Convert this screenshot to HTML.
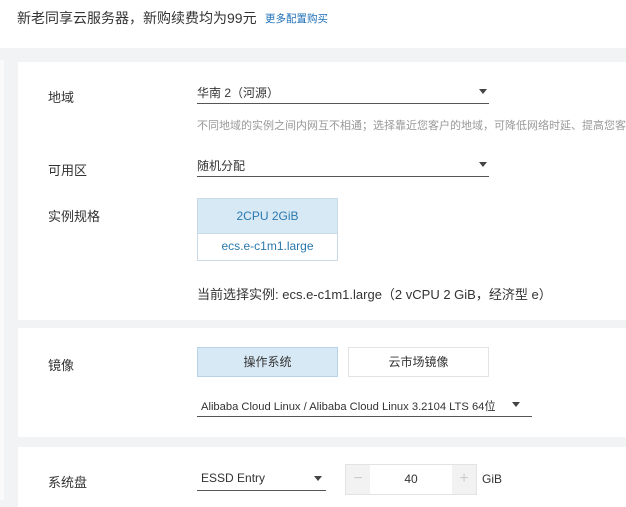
<!DOCTYPE html>
<html><head><meta charset="utf-8"><style>
*{margin:0;padding:0;box-sizing:border-box}
body{width:626px;height:500px;overflow:hidden;background:#f2f3f5;font-family:"Liberation Sans","Noto Sans CJK SC",sans-serif;position:relative;color:#333}
.a{position:absolute;white-space:nowrap}
.card{position:absolute;left:18px;right:0;background:#fff}
.lbl{font-size:13px;color:#333}
.sel{position:absolute;border-bottom:1.5px solid #555;font-size:12px;color:#333;height:20px}
.arr{position:absolute;right:2px;top:5px;width:0;height:0;border-left:4px solid transparent;border-right:4px solid transparent;border-top:5px solid #444}
</style></head><body>
<div class="a" style="left:0;top:0;width:626px;height:48px;background:#fff"></div>
<div class="a" style="left:17px;top:8px;font-size:14px;color:#333">新老同享云服务器，新购续费均为99元</div>
<div class="a" style="left:265px;top:11px;font-size:10.5px;color:#1f6fb8">更多配置购买</div>
<div class="a" style="left:0;top:60px;width:4px;height:440px;background:#fafafa"></div>

<div class="card" style="top:62px;height:258px"></div>
<div class="card" style="top:328px;height:109px"></div>
<div class="card" style="top:447px;height:60px"></div>

<div class="a lbl" style="left:48px;top:87px">地域</div>
<div class="sel" style="left:197px;top:84px;width:292px"><span style="position:absolute;left:0;top:0">华南 2（河源）</span><i class="arr"></i></div>
<div class="a" style="left:197px;top:117px;font-size:11px;color:#999">不同地域的实例之间内网互不相通；选择靠近您客户的地域，可降低网络时延、提高您客</div>

<div class="a lbl" style="left:48px;top:160px">可用区</div>
<div class="sel" style="left:197px;top:157px;width:292px"><span style="position:absolute;left:0;top:0">随机分配</span><i class="arr"></i></div>

<div class="a lbl" style="left:48px;top:206px">实例规格</div>
<div class="a" style="left:197px;top:198px;width:141px;height:63px;border:1px solid #c9d9e6">
<div style="height:35px;background:#d8e9f6;border-bottom:1px solid #c9d9e6;text-align:center;line-height:34px;font-size:12px;color:#2a78ad">2CPU 2GiB</div>
<div style="text-align:center;line-height:25px;font-size:12px;color:#2a78ad">ecs.e-c1m1.large</div></div>
<div class="a" style="left:197px;top:284px;font-size:13px;color:#333">当前选择实例: ecs.e-c1m1.large（2 vCPU 2 GiB，经济型 e）</div>

<div class="a lbl" style="left:48px;top:355px">镜像</div>
<div class="a" style="left:197px;top:347px;width:141px;height:30px;background:#d8e9f6;border:1px solid #b8d3e8;text-align:center;line-height:28px;font-size:12px">操作系统</div>
<div class="a" style="left:348px;top:347px;width:141px;height:30px;background:#fff;border:1px solid #e3e3e3;text-align:center;line-height:28px;font-size:12px">云市场镜像</div>
<div class="sel" style="left:197px;top:397px;width:335px"><span style="position:absolute;left:4px;top:1px;font-size:11.2px">Alibaba Cloud Linux / Alibaba Cloud Linux 3.2104 LTS 64位</span><i class="arr" style="right:12px"></i></div>

<div class="a lbl" style="left:48px;top:472px">系统盘</div>
<div class="sel" style="left:197px;top:471px;width:129px"><span style="position:absolute;left:4px;top:0">ESSD Entry</span><i class="arr" style="right:4px"></i></div>
<div class="a" style="left:345px;top:464px;width:132px;height:31px;border:1px solid #e3e3e3;background:#fff">
<div style="position:absolute;left:0;top:0;width:24px;height:29px;background:#f2f2f2;color:#ccc;text-align:center;line-height:27px;font-size:16px">−</div>
<div style="position:absolute;left:24px;right:24px;text-align:center;line-height:29px;font-size:12px">40</div>
<div style="position:absolute;right:0;top:0;width:24px;height:29px;background:#f2f2f2;color:#ccc;text-align:center;line-height:27px;font-size:16px">+</div></div>
<div class="a" style="left:482px;top:472px;font-size:12px">GiB</div>
</body></html>
